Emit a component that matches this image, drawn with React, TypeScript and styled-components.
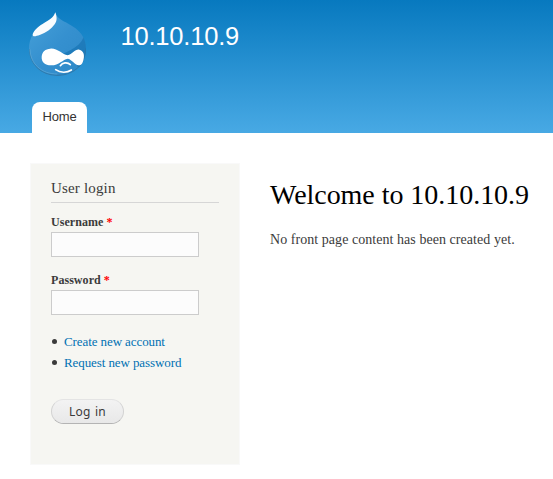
import React from "react";
import styled, { createGlobalStyle } from "styled-components";

const GlobalStyle = createGlobalStyle`
  * { box-sizing: border-box; }
  body {
    margin: 0;
    background: #fff;
    color: #3b3b3b;
    font: 14px/21px "Liberation Serif", serif;
    overflow: hidden;
  }
`;

const Page = styled.div`
  min-height: 479px;
`;

const Header = styled.header`
  height: 133px;
  display: flex;
  flex-direction: column;
  justify-content: space-between;
  background: linear-gradient(to bottom, #0779bf 0%, #48a9e4 100%);
`;

const Branding = styled.div`
  display: flex;
  padding: 5px 0 0 20px;
`;

const Logo = styled.svg`
  display: block;
  width: 75px;
  height: 80px;
`;

const SiteName = styled.div`
  margin: 16px 0 0 25.5px;
  color: #fffeff;
  font: 25.5px/30px "Liberation Sans", sans-serif;
  letter-spacing: -0.2px;
`;

const Menu = styled.nav`
  display: flex;
  padding-left: 32px;
`;

const Tab = styled.a`
  width: 55px;
  height: 31px;
  border-radius: 8px 8px 0 0;
  background: #fff;
  color: #333;
  font: 13px/29px "Liberation Sans", sans-serif;
  letter-spacing: -0.15px;
  text-align: center;
`;

const Main = styled.main`
  display: flex;
  align-items: flex-start;
  gap: 30px;
  padding: 30px 0 0 30px;
`;

const Block = styled.form`
  width: 210px;
  height: 302px;
  padding: 15px 20px;
  border: 1px solid #f9f9f9;
  background: #f6f6f2;
`;

const BlockTitle = styled.h2`
  height: 24px;
  margin: 0 0 9px;
  border-bottom: 1px solid #d6d6d6;
  font-size: 15px;
  line-height: 19px;
  font-weight: normal;
  letter-spacing: 0.17px;
`;

const Field = styled.div`
  height: 58px;
`;

const Label = styled.label`
  display: block;
  height: 20px;
  font-size: 12px;
  line-height: 20px;
  font-weight: bold;
  letter-spacing: 0.05px;
`;

const Required = styled.span`
  color: #f00;
`;

const Input = styled.input`
  display: block;
  width: 148px;
  height: 25px;
  border: 1px solid #ccc;
  border-radius: 0;
  background: #fcfcfc;
  outline: none;
`;

const Links = styled.ul`
  margin: 3px 0 0;
  padding: 0;
  list-style: none;
`;

const LinkItem = styled.li`
  display: flex;
  align-items: center;
  gap: 7px;
  height: 21px;
  padding-left: 1px;
  font-size: 13px;

  &::before {
    content: "";
    width: 5px;
    height: 5px;
    border-radius: 50%;
    background: #3b3b3b;
  }
`;

const Link = styled.a`
  color: #0071b3;
  letter-spacing: -0.09px;
`;

const Submit = styled.button`
  display: block;
  width: 73px;
  height: 25px;
  margin-top: 26px;
  padding: 0;
  border: 1px solid #e4e4e4;
  border-bottom-color: #b4b4b4;
  border-left-color: #d2d2d2;
  border-right-color: #d2d2d2;
  border-radius: 13px;
  background: linear-gradient(#f3f3f3, #e8e8e8);
  color: #3a3a3a;
  font: 12px/23px "Noto Sans", sans-serif;
  letter-spacing: 0.2px;
  word-spacing: 1.2px;
`;

const Content = styled.section`
  flex: 1;
  white-space: nowrap;
`;

const Title = styled.h1`
  margin: 15px 0 17px;
  color: #000;
  font-size: 28px;
  line-height: 34px;
  font-weight: normal;
  letter-spacing: -0.04px;
`;

const Message = styled.p`
  margin: 0;
  letter-spacing: 0.05px;
`;

function DropletLogo() {
  return (
    <Logo viewBox="0 0 225 240" aria-label="Home">
      <defs>
        <linearGradient id="body" x1="0" y1="0" x2="1" y2="1">
          <stop offset="0" stopColor="#4ca6dc" />
          <stop offset="0.5" stopColor="#3590cf" />
          <stop offset="1" stopColor="#2b86c5" />
        </linearGradient>
        <clipPath id="drop">
          <path d="M106 22C111 41 126 46 146 57C178 74 198 96 198 131C198 180 160 213 112 213C64 213 27 178 27 132C27 99 43 74 68 57C88 46 101 40 106 22Z" />
        </clipPath>
      </defs>
      <g clipPath="url(#drop)">
        <rect width="225" height="240" fill="url(#body)" />
        <path d="M194 86C186 124 151 135 120 151C143 149 163 152 173 185L218 190V80Z" fill="#0b69aa" opacity="0.5" />
        <path d="M27 132C27 178 64 211 112 211C160 211 198 180 198 131" fill="none" stroke="#2c6f9a" strokeWidth="4" opacity="0.6" />
        <path d="M30 133C31 177 65 207 112 207" fill="none" stroke="#76b6db" strokeWidth="3" opacity="0.45" />
      </g>
      <path d="M106 22C101 38 88 45 69 56C51 66 38 81 38 90C39 97 49 93 59 90C78 84 95 71 104 58C113 46 110 34 106 22Z" fill="#fff" opacity="0.97" />
      <path d="M91 131C112 129 127 149 143 151C157 148 165 132 178 134C190 137 194 148 191 161C189 174 184 181 176 181C164 180 155 162 143 161C129 163 117 181 94 181C74 181 64 170 65 155C66 140 76 132 91 131Z" fill="#fff" />
      <path d="M121 182C127 173 142 170 151 179" fill="none" stroke="#fff" strokeWidth="5" strokeLinecap="round" />
      <path d="M107 194C121 204 141 204 154 195" fill="none" stroke="#fff" strokeWidth="5" strokeLinecap="round" />
    </Logo>
  );
}

function TextField({ label, type }: { label: string; type: string }) {
  return (
    <Field>
      <Label htmlFor={label}>
        {label} <Required>*</Required>
      </Label>
      <Input id={label} type={type} />
    </Field>
  );
}

export default function App() {
  return (
    <Page>
      <GlobalStyle />
      <Header>
        <Branding>
          <DropletLogo />
          <SiteName>10.10.10.9</SiteName>
        </Branding>
        <Menu>
          <Tab>Home</Tab>
        </Menu>
      </Header>
      <Main>
        <Block>
          <BlockTitle>User login</BlockTitle>
          <TextField label="Username" type="text" />
          <TextField label="Password" type="password" />
          <Links>
            <LinkItem><Link>Create new account</Link></LinkItem>
            <LinkItem><Link>Request new password</Link></LinkItem>
          </Links>
          <Submit type="button">Log in</Submit>
        </Block>
        <Content>
          <Title>Welcome to 10.10.10.9</Title>
          <Message>No front page content has been created yet.</Message>
        </Content>
      </Main>
    </Page>
  );
}
